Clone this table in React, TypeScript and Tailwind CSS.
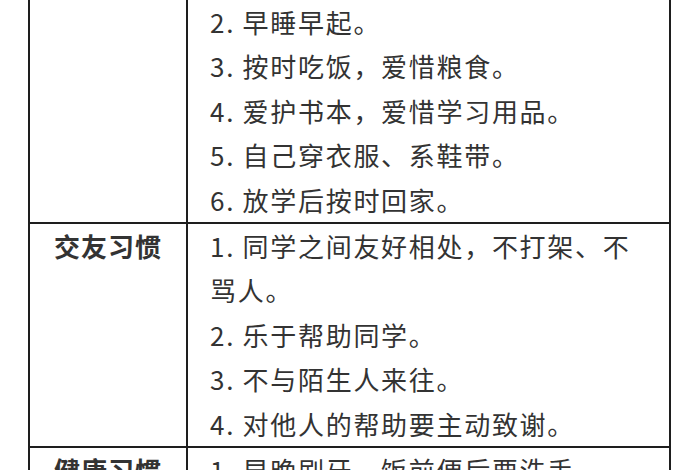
const rows: { label: string; items: string[] }[] = [
  {
    label: "",
    items: [
      "2. 早睡早起。",
      "3. 按时吃饭，爱惜粮食。",
      "4. 爱护书本，爱惜学习用品。",
      "5. 自己穿衣服、系鞋带。",
      "6. 放学后按时回家。",
    ],
  },
  {
    label: "交友习惯",
    items: [
      "1. 同学之间友好相处，不打架、不骂人。",
      "2. 乐于帮助同学。",
      "3. 不与陌生人来往。",
      "4. 对他人的帮助要主动致谢。",
    ],
  },
  {
    label: "健康习惯",
    items: ["1. 早晚刷牙，饭前便后要洗手。", "2. 不挑食，不偏食。"],
  },
];

export default function App() {
  return (
    <div
      className="h-[470px] w-[700px] overflow-hidden bg-white text-[#333]"
      style={{ fontFamily: '"Noto Sans CJK SC", "Noto Sans", sans-serif' }}
    >
      <div className="ml-[28px] w-[643px] border-x-2 border-[#1e1e1e]">
        {rows.map((row, i) => (
          <div key={i} className="flex border-b-2 border-[#1e1e1e]">
            <div className="w-[158px] shrink-0 border-r-2 border-[#1e1e1e] text-center text-[26px] leading-[44.4px] font-bold tracking-[1px]">
              {row.label}
            </div>
            <div className="flex-1 pl-[22px] pr-[16px] text-[26px] leading-[44.4px] tracking-[1.7px]">
              {row.items.map((t, j) => (
                <p key={j}>{t}</p>
              ))}
            </div>
          </div>
        ))}
      </div>
    </div>
  );
}
